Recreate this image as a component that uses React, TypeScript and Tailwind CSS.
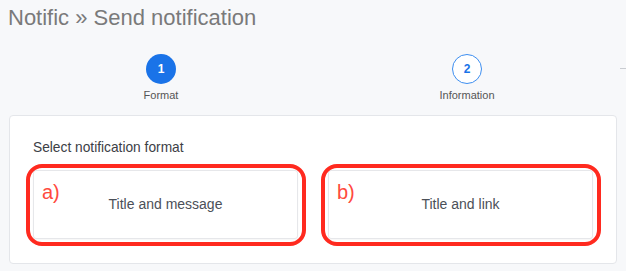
import type { ReactNode } from 'react';

interface StepProps {
  index: number;
  label: string;
  active?: boolean;
}

function Step({ index, label, active }: StepProps) {
  return (
    <div className="flex w-[306px] flex-col items-center">
      <div
        className={`flex h-[30px] w-[30px] items-center justify-center rounded-full text-[12px] font-bold ${
          active
            ? 'bg-[#1a73e8] text-white'
            : 'border-[1.5px] border-[#3d8ef0] bg-white text-[#1a73e8]'
        }`}
      >
        {index}
      </div>
      <span className="mt-[4px] text-[11px] leading-[14px] text-[#555]">{label}</span>
    </div>
  );
}

interface OptionProps {
  mark: string;
  children: ReactNode;
}

function FormatOption({ mark, children }: OptionProps) {
  return (
    <div className="relative">
      <button
        type="button"
        className="flex h-[69px] w-full items-center justify-center rounded-[3px] border border-[#e6e7ea] bg-white text-[14px] text-[#4b5058] shadow-[0_1px_2px_rgba(0,0,0,0.04)]"
      >
        {children}
      </button>
      {/* annotation drawn over the card */}
      <div className="pointer-events-none absolute -top-[6px] -right-[8px] -bottom-[7px] -left-[7px] rounded-[16px] border-4 border-[#ff2a1f]" />
      <span className="pointer-events-none absolute top-[10px] left-[9px] text-[20px] leading-[24px] text-[#ff4a3d]">
        {mark}
      </span>
    </div>
  );
}

export default function App() {
  return (
    <div className="h-[271px] w-full overflow-hidden bg-[#f7f8fa] font-['Liberation_Sans',Arial,sans-serif]">
      <h1 className="pt-[4px] pl-[8px] text-[22px] leading-[28px] font-light text-[#7a7a7a]">
        Notific » Send notification
      </h1>

      <div className="mt-[22px] flex items-start pl-[8px]">
        <Step index={1} label="Format" active />
        <Step index={2} label="Information" />
        <div className="mt-[14px] h-px flex-1 bg-[#c9ccd1]" />
      </div>

      <div className="mx-[9px] mt-[13px] rounded-[4px] border border-[#e4e6ea] bg-white px-[23px] pt-[24px] pb-[24px]">
        <p className="text-[13.75px] leading-[16px] text-[#3c4046]">Select notification format</p>
        <div className="mt-[14px] grid grid-cols-2 gap-[30px]">
          <FormatOption mark="a)">Title and message</FormatOption>
          <FormatOption mark="b)">Title and link</FormatOption>
        </div>
      </div>
    </div>
  );
}
